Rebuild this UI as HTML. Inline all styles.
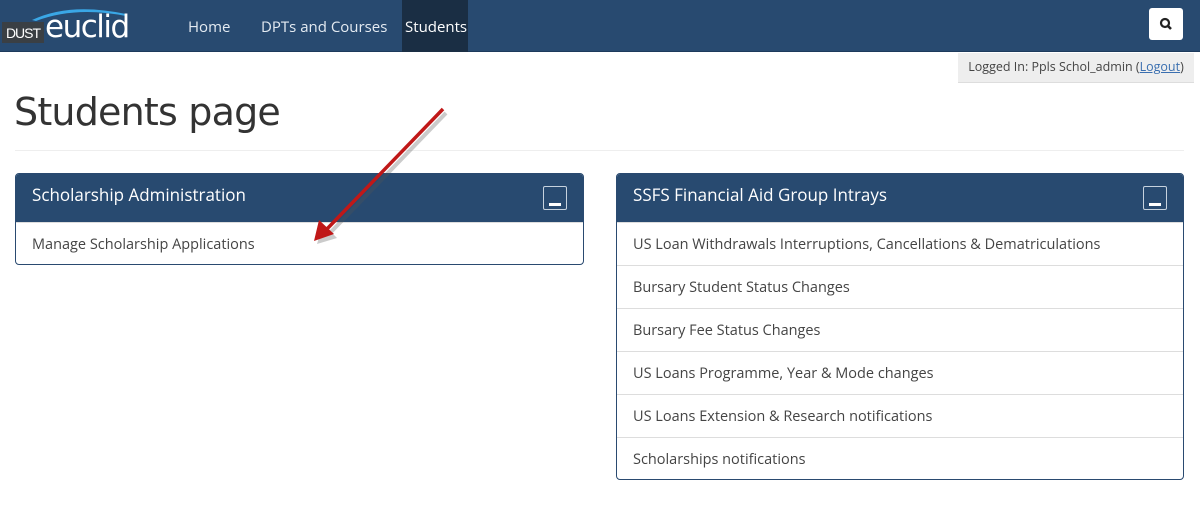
<!DOCTYPE html>
<html><head><meta charset="utf-8"><style>
*{box-sizing:border-box;margin:0;padding:0}
body{width:1200px;height:532px;background:#fff;font-family:"Open Sans","DejaVu Sans","Liberation Sans",sans-serif;position:relative;overflow:hidden;color:#444}
.nav{position:absolute;left:0;top:0;width:1200px;height:52px;background:#284a70;border-bottom:1px solid #1d3a5c}
.nav a{position:absolute;top:0;height:52px;line-height:54px;color:#e4ebf2;font-size:15px;text-decoration:none}
.stud{background:#1a2e44;color:#fff!important;padding:0 3px}
.logo{position:absolute;left:0;top:0}
.dust{position:absolute;left:2px;top:22px;width:42px;height:21px;background:#3a3f44;color:#fff;font-size:14px;line-height:22px;text-align:center;letter-spacing:-1px;font-family:"Liberation Sans",sans-serif}
.euc{position:absolute;left:45px;top:8px;color:#fff;font-size:31px;font-family:"DejaVu Sans",sans-serif;letter-spacing:-1.5px;line-height:38px}
.srch{position:absolute;left:1149px;top:8px;width:34px;height:32px;background:#fff;border-radius:3px}
.login{position:absolute;left:958px;top:53px;width:236px;height:30px;background:#eeeeee;font-size:12.5px;line-height:28px;text-align:center;color:#444;border-bottom:1px solid #ddd}
.login u{color:#3a6fb0}
h1{position:absolute;left:14px;top:90px;font-size:38px;font-weight:normal;color:#333;font-family:"DejaVu Sans",sans-serif;letter-spacing:-0.8px}
.hr{position:absolute;left:15px;top:150px;width:1169px;height:1px;background:#eee}
.panel{position:absolute;top:173px;border:1px solid #2a4a70;border-radius:4px;overflow:hidden;background:#fff}
.ph{height:48px;background:#284a70;color:#fff;font-size:17px;line-height:42px;padding-left:16px;position:relative}
.btn{position:absolute;right:16px;top:12px;width:24px;height:24px;border:1px solid #c6d2de;border-radius:2px}
.btn:after{content:"";position:absolute;left:5px;top:16px;width:12px;height:3px;background:#fff}
.row{height:43px;line-height:43px;padding-left:16px;font-size:14.5px;color:#444;border-top:1px solid #ddd}
.row:first-of-type{border-top:none}
</style></head><body>
<div class="nav">
 <div class="logo"><svg style="position:absolute;left:30px;top:6px" width="100" height="20"><path d="M2 14 Q40 -4 96 8 L96 10 Q45 0 6 15Z" fill="#3aa7e6"/></svg>
 <div class="dust">DUST</div><div class="euc">euclid</div></div>
 <a style="left:188px">Home</a>
 <a style="left:261px">DPTs and Courses</a>
 <a class="stud" style="left:402px;width:66px">Students</a>
 <div class="srch"><svg width="34" height="32"><circle cx="16" cy="15" r="4" stroke="#222" stroke-width="2.2" fill="none"/><line x1="19" y1="18" x2="22" y2="21" stroke="#222" stroke-width="2.6"/></svg></div>
</div>
<div class="login">Logged In: Ppls Schol_admin (<u>Logout</u>)</div>
<h1>Students page</h1>
<div class="hr"></div>
<div class="panel" style="left:15px;width:569px;height:92px">
 <div class="ph">Scholarship Administration<div class="btn"></div></div>
 <div class="row">Manage Scholarship Applications</div>
</div>
<div class="panel" style="left:616px;width:568px;height:307px">
 <div class="ph">SSFS Financial Aid Group Intrays<div class="btn"></div></div>
 <div class="row">US Loan Withdrawals Interruptions, Cancellations &amp; Dematriculations</div>
 <div class="row">Bursary Student Status Changes</div>
 <div class="row">Bursary Fee Status Changes</div>
 <div class="row">US Loans Programme, Year &amp; Mode changes</div>
 <div class="row">US Loans Extension &amp; Research notifications</div>
 <div class="row">Scholarships notifications</div>
</div>
<svg style="position:absolute;left:0;top:0" width="1200" height="532">
 <g transform="translate(3,4)" opacity="0.3"><line x1="443" y1="109" x2="326" y2="230" stroke="#555" stroke-width="4"/><polygon points="314,240 320,220 334,234" fill="#555"/></g>
 <line x1="443" y1="109" x2="326" y2="230" stroke="#c01818" stroke-width="3.5"/>
 <polygon points="314,241 319,220 334,234" fill="#c01818"/>
</svg>
</body></html>
